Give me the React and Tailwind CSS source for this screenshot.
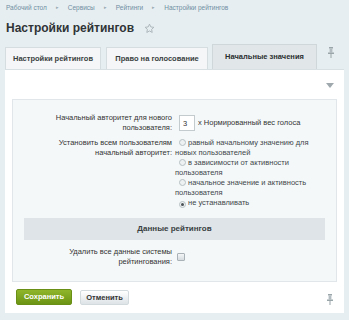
import React from "react";

const crumbs = ["Рабочий стол", "Сервисы", "Рейтинги", "Настройки рейтингов"];

const Radio = ({ checked }) => (
  <span className="inline-flex items-center justify-center w-[7px] h-[7px] rounded-full border border-[#b7c0c4] bg-[#eef1f2] ml-[4px] mr-[2px] align-[-1px]">
    {checked && <span className="w-[3px] h-[3px] rounded-full bg-[#4a5256]" />}
  </span>
);

const Pin = ({ className }) => (
  <svg className={className} width="6" height="11" viewBox="0 0 6 11">
    <rect x="1" y="0" width="4" height="1.5" fill="#9aa5aa" />
    <rect x="1.6" y="1.5" width="2.8" height="4" fill="#b3bcc0" />
    <rect x="0" y="5.5" width="6" height="1.5" fill="#9aa5aa" />
    <rect x="2.5" y="7" width="1" height="4" fill="#9aa5aa" />
  </svg>
);

const App = () => {
  return (
    <div className="w-[349px] h-[320px] overflow-hidden bg-[#e7eef1] font-['Liberation_Sans',Arial,sans-serif] text-[#333]">
      {/* breadcrumb */}
      <div className="flex items-center h-[16px] pl-[6px] text-[6.5px] text-[#6f8fa2]">
        {crumbs.map((c, i) => (
          <React.Fragment key={c}>
            {i > 0 && <span className="mx-[9px] text-[#9aaab3] text-[5px]">▸</span>}
            <span>{c}</span>
          </React.Fragment>
        ))}
      </div>

      {/* title */}
      <div className="flex items-center h-[24px] pl-[6px]">
        <h1 className="text-[12px] font-bold text-[#2f3437]">Настройки рейтингов</h1>
        <svg className="ml-[10px]" width="11" height="11" viewBox="0 0 24 24">
          <path
            d="M12 2.5l2.9 6.1 6.6.8-4.9 4.6 1.3 6.6L12 17.3l-5.9 3.3 1.3-6.6-4.9-4.6 6.6-.8z"
            fill="none"
            stroke="#a7b2b7"
            strokeWidth="2"
            strokeLinejoin="round"
          />
        </svg>
      </div>

      {/* tabs */}
      <div className="flex items-end h-[29px] pl-[5px]">
        <div className="w-[96px] h-[22px] flex items-center justify-center bg-[#f4f6f7] border border-b-0 border-[#d6dde0] text-[7.5px] font-bold text-[#3a3f42]">
          Настройки рейтингов
        </div>
        <div className="ml-[5px] w-[102px] h-[22px] flex items-center justify-center bg-[#f4f6f7] border border-b-0 border-[#d6dde0] text-[7.5px] font-bold text-[#3a3f42]">
          Право на голосование
        </div>
        <div className="ml-[4px] w-[105px] h-[25px] flex items-center justify-center bg-[#e1e7e9] border border-b-0 border-[#cfd7da] text-[7.5px] font-bold text-[#2a2e30]">
          Начальные значения
        </div>
        <div className="flex-1 h-[25px] flex items-start justify-center pt-[3px] pr-[4px]">
          <Pin />
        </div>
      </div>

      {/* content */}
      <div className="mx-[5px] h-[244px] bg-white border-t border-[#d9e0e3]">
        <div className="h-[29px] flex justify-end items-start pt-[13px] pr-[10px]">
          <svg width="8" height="5" viewBox="0 0 8 5">
            <path d="M0 0h8L4 5z" fill="#9ea8ad" />
          </svg>
        </div>

        <div className="mx-[7px] h-[183px] bg-[#f5f8f9] border border-[#e0e6e9] pt-[13px] text-[7.5px] leading-[10px] text-[#333]">
          <div className="flex items-center">
            <div className="w-[159px] text-right">
              Начальный авторитет для нового
              <br />
              пользователя:
            </div>
            <input
              readOnly
              value="3"
              className="ml-[7px] w-[16px] h-[16px] border border-[#c3cbcf] bg-white px-[3px] text-[7.5px] text-[#333] outline-none"
            />
            <span className="ml-[3px]">x Нормированный вес голоса</span>
          </div>

          <div className="flex items-start mt-[5px]">
            <div className="w-[159px] text-right">
              Установить всем пользователям
              <br />
              начальный авторитет:
            </div>
            <div className="ml-[3px] text-[#40474b]">
              <div>
                <Radio />
                равный начальному значению для
                <br />
                новых пользователей
              </div>
              <div>
                <Radio />
                в зависимости от активности
                <br />
                пользователя
              </div>
              <div>
                <Radio />
                начальное значение и активность
                <br />
                пользователя
              </div>
              <div>
                <Radio checked />
                не устанавливать
              </div>
            </div>
          </div>

          <div className="mx-[11px] mt-[10px] h-[22px] flex items-center justify-center bg-[#dee4e7] font-bold text-[8px] text-[#3a3f42]">
            Данные рейтингов
          </div>

          <div className="flex items-center mt-[7px]">
            <div className="w-[159px] text-right">
              Удалить все данные системы
              <br />
              рейтингования:
            </div>
            <span className="ml-[5px] w-[8px] h-[8px] rounded-[1px] border border-[#a9b2b6] bg-gradient-to-b from-[#f4f6f7] to-[#d6dcdf]" />
          </div>
        </div>

        <div className="flex items-center pt-[7px] pl-[11px] pr-[11px]">
          <button className="w-[56px] h-[16px] rounded-[2px] bg-gradient-to-b from-[#8fb62a] to-[#6c9414] border border-[#6a8f17] text-white text-[7.5px] font-bold">
            Сохранить
          </button>
          <button className="ml-[8px] w-[49px] h-[15px] mt-[1px] rounded-[2px] bg-gradient-to-b from-[#ffffff] to-[#dde3e6] border border-[#d3dade] text-[#333] text-[7.5px] font-bold">
            Отменить
          </button>
          <div className="flex-1" />
          <Pin className="mt-[4px]" />
        </div>
      </div>
    </div>
  );
};

export default App;
